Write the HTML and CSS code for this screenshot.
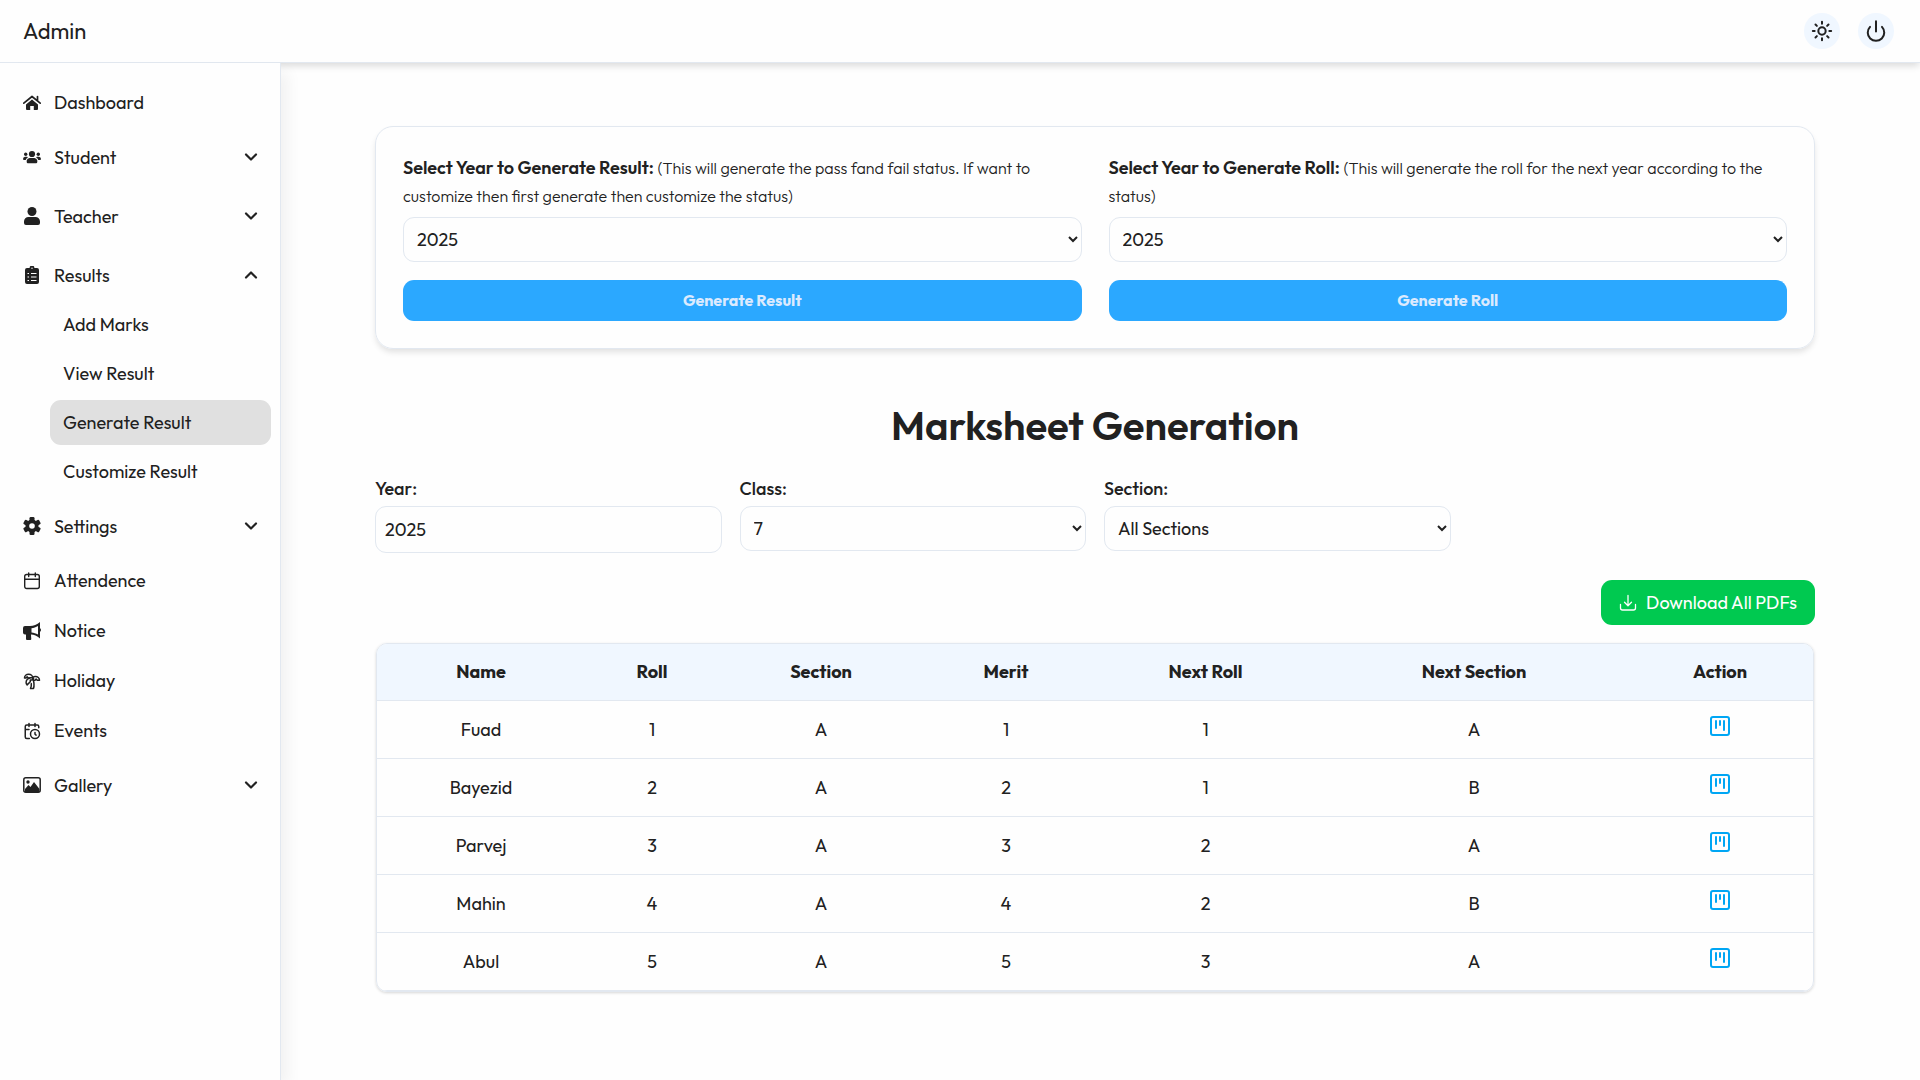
FILE: index.html
```
<!DOCTYPE html>
<html lang="en">
<head>
<meta charset="UTF-8" />
<meta name="viewport" content="width=device-width, initial-scale=1" />
<title>Admin</title>
<link rel="stylesheet" href="styles.css">
</head>
<body>
  <!-- Shared icons -->
  <svg class="icon-defs" aria-hidden="true">
    <symbol id="chevron" viewBox="0 0 20 20">
      <path d="M5 7.5l5 5 5-5" fill="none" stroke="currentColor" stroke-width="2.2" stroke-linecap="round" stroke-linejoin="round"/>
    </symbol>
    <symbol id="board" viewBox="0 0 24 24">
      <g fill="none" stroke="currentColor" stroke-width="2" stroke-linecap="round" stroke-linejoin="round">
        <rect x="3" y="3" width="18" height="18" rx="2"/>
        <path d="M8 7v7M12 7v4M16 7v9"/>
      </g>
    </symbol>
  </svg>

  <header class="topbar">
    <div class="brand">Admin</div>
    <div class="topbar-actions">
      <button class="round-btn" type="button" aria-label="Toggle theme">
        <svg viewBox="0 0 24 24" fill="none" stroke="currentColor" stroke-width="2.2" stroke-linecap="round">
          <circle cx="12" cy="12" r="4"/>
          <path d="M12 2v2M12 20v2M4.9 4.9l1.5 1.5M17.6 17.6l1.5 1.5M2 12h2M20 12h2M6.4 17.6l-1.5 1.5M19.1 4.9l-1.5 1.5"/>
        </svg>
      </button>
      <button class="round-btn" type="button" aria-label="Log out">
        <svg viewBox="0 0 24 24" fill="none" stroke="currentColor" stroke-width="2.2" stroke-linecap="round">
          <path d="M12 1.5v11M18.5 7.5a9 9 0 1 1-13 0"/>
        </svg>
      </button>
    </div>
  </header>

  <div class="layout">
    <!-- Sidebar -->
    <nav class="sidebar">
      <a class="nav-link" href="#">
        <svg class="nav-icon" viewBox="0 0 18 18" fill="currentColor"><path d="M9 5.6l6 5V15a1 1 0 0 1-1 1h-3.2v-4H7.2v4H4a1 1 0 0 1-1-1v-4.4z"/><path d="M.8 9.2L9 2.5l8.200 6.700M14.500 2.500v4" fill="none" stroke="currentColor" stroke-width="1.7" stroke-linecap="round" stroke-linejoin="round"/></svg>
        <span>Dashboard</span>
      </a>
      <button class="nav-link nav-group" type="button">
        <svg class="nav-icon" viewBox="0 0 18 18" fill="currentColor"><circle cx="9" cy="6" r="3.1"/><circle cx="2.7" cy="6.3" r="1.7"/><circle cx="15.3" cy="6.3" r="1.7"/><path d="M3.7 14v-1.500A3 3 0 0 1 6.700 10h4.600a3 3 0 0 1 3 2.500V14a1.200 1.200 0 0 1-1.200 1.200H4.900A1.200 1.200 0 0 1 3.700 14zM0 11a2.200 2.200 0 0 1 2-2.200h2l1 .4A4.500 4.500 0 0 0 2.700 12H1a1 1 0 0 1-1-1zM18 11a2.200 2.200 0 0 0-2-2.200h-2l-1 .4a4.500 4.500 0 0 1 2.300 2.800H17a1 1 0 0 0 1-1z"/></svg>
        <span>Student</span>
        <svg class="chevron"><use href="#chevron"/></svg>
      </button>
      <button class="nav-link nav-group" type="button">
        <svg class="nav-icon" viewBox="0 0 18 18" fill="currentColor"><circle cx="9" cy="4.5" r="4.5"/><path d="M1 16v-1.500A4.500 4.500 0 0 1 5.500 10h7a4.500 4.500 0 0 1 4.500 4.500V16a2 2 0 0 1-2 2H3a2 2 0 0 1-2-2z"/></svg>
        <span>Teacher</span>
        <svg class="chevron"><use href="#chevron"/></svg>
      </button>
      <button class="nav-link nav-group" type="button" aria-expanded="true">
        <svg class="nav-icon" viewBox="0 0 18 18"><path d="M4 2h2.600a2.400 2.400 0 0 1 4.800 0H14a2 2 0 0 1 2 2v12a2 2 0 0 1-2 2H4a2 2 0 0 1-2-2V4a2 2 0 0 1 2-2z" fill="currentColor"/><path d="M8 7.500h5.500M8 11h5.500M8 14.500h5.500M4.500 7.500h1.500M4.500 11h1.500M4.500 14.500h1.500" stroke="#fff" stroke-width="1.1"/><circle cx="9" cy="2.2" r=".7" fill="#fff"/></svg>
        <span>Results</span>
        <svg class="chevron chevron-up"><use href="#chevron"/></svg>
      </button>
      <div class="submenu">
        <a class="sub-link" href="#">Add Marks</a>
        <a class="sub-link" href="#">View Result</a>
        <a class="sub-link active" href="#" aria-current="page">Generate Result</a>
        <a class="sub-link" href="#">Customize Result</a>
      </div>
      <button class="nav-link nav-group" type="button">
        <svg class="nav-icon" viewBox="0 0 18 18"><g fill="currentColor"><circle cx="9" cy="9" r="6.5"/><rect x="6.5" y="0" width="5" height="18" rx="1.2"/><rect x="6.5" y="0" width="5" height="18" rx="1.2" transform="rotate(60 9 9)"/><rect x="6.5" y="0" width="5" height="18" rx="1.2" transform="rotate(120 9 9)"/></g><circle cx="9" cy="9" r="2.8" fill="#fff"/></svg>
        <span>Settings</span>
        <svg class="chevron"><use href="#chevron"/></svg>
      </button>
      <a class="nav-link" href="#">
        <svg class="nav-icon" viewBox="0 0 18 18" fill="none" stroke="currentColor" stroke-width="1.4" stroke-linecap="round"><rect x="1.7" y="2.5" width="14.6" height="14" rx="2"/><path d="M1.700 7.300h14.600M5.700 1v3.500M12.300 1v3.500"/></svg>
        <span>Attendence</span>
      </a>
      <a class="nav-link" href="#">
        <svg class="nav-icon" viewBox="0 0 18 18" fill="currentColor"><path fill-rule="evenodd" d="M17 0v6.200c1.300.6 1.300 3 0 3.600V16.500c-3-2.500-6-3.700-9-3.900 0 1.500.2 3 .3 4.400a1 1 0 0 1-1 1H4a1 1 0 0 1-1-1v-4.500H2a2 2 0 0 1-2-2V6a2 2 0 0 1 2-2h5c3.500 0 7-1.500 10-4zM15 4c-2 1.300-4.300 2-6.500 2.200v4.200c2.200.2 4.500.9 6.500 2.200z"/></svg>
        <span>Notice</span>
      </a>
      <a class="nav-link" href="#">
        <svg class="nav-icon" viewBox="0 0 24 24" fill="none" stroke="currentColor" stroke-width="2" stroke-linecap="round" stroke-linejoin="round"><path d="M13 8c0-2.800-2.500-5-5.500-5S2 5.200 2 8h2l1.500-1.500L7 8h2"/><path d="M13 7.100A5.800 5.800 0 0 1 16.500 6c3 0 5.500 2.200 5.500 5h-3l-1.500-1.500L16 11h-1.500"/><path d="M5.900 9.700c-2.200 2.200-2.400 5.600-.4 7.500l4.200-4.200v-2.200h2.200L14.100 8.700c-2-2-6-1.200-8.200 1z"/><path d="M11 15.500c.5 2.500-.2 4.500-1 6.500h4c2-5.500-.5-12-1-14"/></svg>
        <span>Holiday</span>
      </a>
      <a class="nav-link" href="#">
        <svg class="nav-icon" viewBox="0 0 24 24" fill="none" stroke="currentColor" stroke-width="2" stroke-linecap="round" stroke-linejoin="round"><path d="M21 7.500V6a2 2 0 0 0-2-2H5a2 2 0 0 0-2 2v14a2 2 0 0 0 2 2h3.500M16 2v4M8 2v4M3 10h5M17.500 17.500L16 16.300V14"/><circle cx="16" cy="16" r="6"/></svg>
        <span>Events</span>
      </a>
      <button class="nav-link nav-group" type="button">
        <svg class="nav-icon" viewBox="0 0 18 18" fill="currentColor"><rect x=".8" y="1.8" width="16.4" height="14.4" rx="2" fill="none" stroke="currentColor" stroke-width="1.5"/><circle cx="5" cy="6" r="1.7"/><path d="M2 16v-3l3.500-4 2 2 3.500-5 5.500 7v3z"/></svg>
        <span>Gallery</span>
        <svg class="chevron"><use href="#chevron"/></svg>
      </button>
    </nav>

    <main class="content">
      <section class="card">
        <form class="card-form">
          <label class="card-label" for="result-year"><strong>Select Year to Generate Result:</strong> <small>(This will generate the pass fand fail status. If want to customize then first generate then customize the status)</small></label>
          <select class="field" id="result-year"><option>2025</option></select>
          <button class="primary-btn" type="button">Generate Result</button>
        </form>
        <form class="card-form">
          <label class="card-label" for="roll-year"><strong>Select Year to Generate Roll:</strong> <small>(This will generate the roll for the next year according to the status)</small></label>
          <select class="field" id="roll-year"><option>2025</option></select>
          <button class="primary-btn" type="button">Generate Roll</button>
        </form>
      </section>

      <h1>Marksheet Generation</h1>

      <div class="filters">
        <div class="filter">
          <label for="year">Year:</label>
          <input class="field" id="year" type="text" value="2025">
        </div>
        <div class="filter">
          <label for="class">Class:</label>
          <select class="field" id="class"><option>7</option></select>
        </div>
        <div class="filter">
          <label for="section">Section:</label>
          <select class="field" id="section"><option>All Sections</option></select>
        </div>
      </div>

      <div class="download-row">
        <button class="download-btn" type="button">
          <svg viewBox="0 0 18 18" fill="none" stroke="currentColor" stroke-width="1.3" stroke-linecap="round" stroke-linejoin="round"><path d="M9 1.500v10M5.500 8.300L9 11.800l3.500-3.500M1.500 10.500V14a2 2 0 0 0 2 2h11a2 2 0 0 0 2-2v-3.500"/></svg>
          Download All PDFs
        </button>
      </div>

      <div class="table-wrap">
        <table>
          <colgroup>
            <col class="col-name"><col class="col-roll"><col class="col-section"><col class="col-merit"><col class="col-next-roll"><col class="col-next-section"><col class="col-action">
          </colgroup>
          <thead>
            <tr><th>Name</th><th>Roll</th><th>Section</th><th>Merit</th><th>Next Roll</th><th>Next Section</th><th>Action</th></tr>
          </thead>
          <tbody>
            <tr><td>Fuad</td><td>1</td><td>A</td><td>1</td><td>1</td><td>A</td><td><button class="sheet-btn" type="button" aria-label="Marksheet of Fuad"><svg><use href="#board"/></svg></button></td></tr>
            <tr><td>Bayezid</td><td>2</td><td>A</td><td>2</td><td>1</td><td>B</td><td><button class="sheet-btn" type="button" aria-label="Marksheet of Bayezid"><svg><use href="#board"/></svg></button></td></tr>
            <tr><td>Parvej</td><td>3</td><td>A</td><td>3</td><td>2</td><td>A</td><td><button class="sheet-btn" type="button" aria-label="Marksheet of Parvej"><svg><use href="#board"/></svg></button></td></tr>
            <tr><td>Mahin</td><td>4</td><td>A</td><td>4</td><td>2</td><td>B</td><td><button class="sheet-btn" type="button" aria-label="Marksheet of Mahin"><svg><use href="#board"/></svg></button></td></tr>
            <tr><td>Abul</td><td>5</td><td>A</td><td>5</td><td>3</td><td>A</td><td><button class="sheet-btn" type="button" aria-label="Marksheet of Abul"><svg><use href="#board"/></svg></button></td></tr>
          </tbody>
        </table>
      </div>
    </main>
  </div>
</body>
</html>
```
FILE: styles.css
```
* {
  margin: 0;
  padding: 0;
  box-sizing: border-box;
}

body {
  display: flex;
  flex-direction: column;
  min-height: 100vh;
  font-family: 'Outfit', 'Lato', sans-serif;
  font-size: 18px;
  line-height: 27px;
  color: #212121;
  background: #fefefe;
}

button, input, select {
  font: inherit;
  color: inherit;
}

button {
  border: none;
  background: none;
  cursor: pointer;
}

a {
  color: inherit;
  text-decoration: none;
}

.icon-defs {
  position: absolute;
  width: 0;
  height: 0;
}

/* Top bar */
.topbar {
  display: flex;
  align-items: center;
  justify-content: space-between;
  height: 63px;
  padding: 0 26px 0 23px;
  background: #fefefe;
  border-bottom: 1px solid #e2e8f0;
  box-shadow: 0 4px 7px -1px rgba(0, 0, 0, 0.14);
}

.brand {
  font-size: 22px;
}

.topbar-actions {
  display: flex;
  gap: 18px;
}

.round-btn {
  display: flex;
  align-items: center;
  justify-content: center;
  width: 36px;
  height: 36px;
  border-radius: 50%;
  background: #f0f7ff;
}

.round-btn svg {
  width: 22px;
  height: 22px;
}

.layout {
  display: flex;
  flex: 1;
}

/* Sidebar */
.sidebar {
  position: relative;
  display: flex;
  flex-direction: column;
  gap: 5px;
  flex: none;
  width: 281px;
  padding: 17px 9px;
  background: #fefefe;
  border-right: 1px solid #e2e8f0;
  box-shadow: 10px 6px 14px -3px rgba(0, 0, 0, 0.05);
}

.nav-link {
  display: flex;
  align-items: center;
  gap: 13px;
  height: 45px;
  padding: 0 14px;
  border-radius: 11px;
  text-align: left;
}

.nav-group {
  height: 54px;
}

.nav-icon {
  width: 18px;
  height: 18px;
}

.chevron {
  width: 20px;
  height: 20px;
  margin-left: auto;
  margin-right: -4px;
}

.chevron-up {
  transform: rotate(180deg);
}

.submenu {
  display: flex;
  flex-direction: column;
  gap: 4px;
  margin: -5px 0 0 41px;
}

.sub-link {
  height: 45px;
  padding: 9px 13px;
  border-radius: 11px;
}

.active {
  background: #e0e0e0;
}

/* Main content */
.content {
  flex: 1;
  min-width: 0;
  padding: 63px 105px 90px 94px;
}

.card {
  display: flex;
  gap: 27px;
  padding: 27px;
  border: 1px solid #e2e8f0;
  border-radius: 18px;
  box-shadow: 0 4px 6px -1px rgba(0, 0, 0, 0.12);
}

.card-form {
  flex: 1;
}

.card-label {
  display: block;
  margin-bottom: 7px;
}

.card-label strong {
  font-weight: 600;
}

.card-label small {
  font-size: 16px;
  font-weight: 300;
}

.field {
  display: block;
  width: 100%;
  height: 45px;
  padding: 0 9px;
  border: 1px solid #e2e8f0;
  border-radius: 11px;
  background: #fefefe;
}

.primary-btn {
  width: 100%;
  height: 41px;
  margin-top: 18px;
  border-radius: 11px;
  background: #2ba8ff;
  color: #dbeafe;
  font-size: 16px;
  font-weight: 700;
}

h1 {
  margin: 54px 0 27px;
  font-size: 40px;
  font-weight: 600;
  line-height: 45px;
  text-align: center;
}

.filters {
  display: grid;
  grid-template-columns: repeat(4, 1fr);
  gap: 18px;
}

.filter label {
  display: block;
  margin-bottom: 4px;
  font-weight: 500;
}

input.field {
  height: 47px;
}

.download-row {
  display: flex;
  justify-content: flex-end;
  margin: 27px 0 18px;
}

.download-btn {
  display: flex;
  align-items: center;
  gap: 9px;
  height: 45px;
  padding: 0 18px;
  border-radius: 11px;
  background: #00c950;
  color: #fefefe;
}

.download-btn svg {
  width: 18px;
  height: 18px;
}

/* Marks table */
.table-wrap {
  overflow: hidden;
  margin: 0 1px;
  border: 1px solid #e2e8f0;
  border-radius: 11px;
  box-shadow: 0 1px 3px rgba(0, 0, 0, 0.16);
}

table {
  width: 100%;
  table-layout: fixed;
  border-collapse: collapse;
  text-align: center;
}

.col-name { width: 208px; }
.col-roll { width: 134px; }
.col-section { width: 204px; }
.col-merit { width: 166px; }
.col-next-roll { width: 233px; }
.col-next-section { width: 304px; }
.col-action { width: 188px; }

thead {
  background: #f0f7ff;
}

th {
  height: 56px;
  font-weight: 700;
}

td {
  height: 58px;
}

tr {
  border-bottom: 1px solid #e2e8f0;
}

.sheet-btn {
  display: block;
  margin: 0 auto 7px;
  color: #00a6f4;
}

.sheet-btn svg {
  display: block;
  width: 24px;
  height: 24px;
}
```
